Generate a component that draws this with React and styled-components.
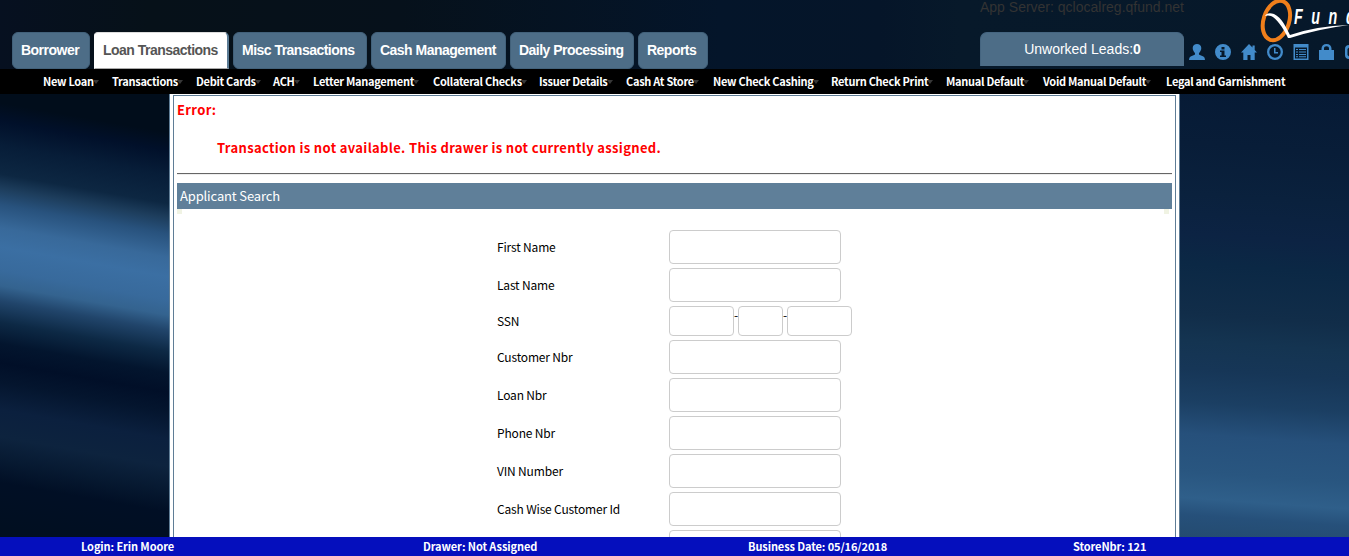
import React from "react";
import styled, { createGlobalStyle } from "styled-components";

const sans = '"Liberation Sans", Arial, sans-serif';
const humanist = '"Noto Sans CJK SC", "Source Sans Pro", sans-serif';

const GlobalStyle = createGlobalStyle`
  * { box-sizing: border-box; }
  body { margin: 0; background: #06152a; font-family: ${humanist}; overflow: hidden; }
`;

const Page = styled.div`
  display: flex;
  flex-direction: column;
  height: 556px;
  width: 100%;
  overflow: hidden;
`;

const Header = styled.header`
  display: flex;
  flex: none;
  height: 69px;
  padding-left: 12px;
  overflow: hidden;
  background: linear-gradient(90deg, #061020 0, #061119 150px, #06111b 400px, #04152a 720px, #051529 880px, #07192a 960px, #06182a 100%);
`;

const Tabs = styled.nav`
  display: flex;
  gap: 4px;
  width: 968px;
  padding-top: 32px;
  flex: none;
`;

const Tab = styled.a`
  width: ${(p) => p.$width}px;
  height: 37px;
  border: 1px solid #42617a;
  border-radius: 6px;
  background: ${(p) => (p.$active ? "#fff" : "#4d6d87")};
  ${(p) => p.$active && "border-color: #ddd #5b7b94 #aaa #fff; border-right-width: 2px; border-radius: 4px 5px 0 0;"}
  color: ${(p) => (p.$active ? "#555" : "#fff")};
  font: bold 14px/35px ${sans};
  letter-spacing: -0.52px;
  padding-left: 8px;
  white-space: nowrap;
  flex: none;
`;

const ServerColumn = styled.div`
  width: 204px;
  flex: none;
`;

const ServerName = styled.div`
  height: 32px;
  font: 14px/15px ${sans};
  color: #333;
  white-space: nowrap;
`;

const Leads = styled.div`
  height: 34px;
  border: 1px solid #456580;
  border-width: 1px 0 0 1px;
  border-radius: 7px 7px 0 0;
  background: #4d6d87;
  color: #fff;
  font: 14px/33px ${sans};
  text-align: center;
`;

const Brand = styled.div`
  width: 165px;
  flex: none;
  overflow: hidden;
`;

const Logo = styled.svg`
  display: block;
  width: 89px;
  height: 44px;
  margin-left: 76px;
`;

const IconBar = styled.div`
  display: flex;
  gap: 10px;
  padding-left: 5px;
  color: #428bca;
  svg { width: 16px; height: 16px; flex: none; display: block; fill: currentColor; }
`;

const MenuBar = styled.nav`
  display: flex;
  flex: none;
  height: 25px;
  padding-left: 43px;
  background: #000;
`;

const MenuItem = styled.a`
  display: flex;
  width: ${(p) => p.$width}px;
  flex: none;
  color: #fff;
  font: bold 11px/25px ${humanist};
  letter-spacing: -0.28px;
  white-space: nowrap;
`;

const Caret = styled.i`
  width: 0;
  height: 0;
  margin: 11px 0 0 -1px;
  border: 3px solid transparent;
  border-top: 4px solid #383838;
  border-bottom: 0;
`;

const Main = styled.main`
  display: flex;
  height: 443px;
  flex: none;
`;

const LeftBackdrop = styled.div`
  width: 169px;
  background: linear-gradient(190deg, #010d1b 0, #010d1b 38px, #01102a 56px, #071d38 80px, #0d2742 108px, #1d3d5c 122px, #28527d 138px, #38699a 161px, #3b6fa3 180px, #386a9c 203px, #34638f 218px, #21456b 233px, #0d2945 254px, #03152e 275px, #010f28 294px, #04152e 313px, #0b203e 340px, #0d233e 367px, #071a32 389px, #010f25 412px, #010f20 466px);
`;

const RightBackdrop = styled.div`
  flex: 1;
  background: linear-gradient(184deg, #061a35 0, #081d38 60px, #0a213d 110px, #0c2343 150px, #0b2845 180px, #112d49 230px, #143451 257px, #163657 285px, #1b3f63 318px, #26507b 350px, #295680 388px, #2f5f8a 414px, #26507a 431px, #244b70 454px);
`;

const Frame = styled.section`
  width: 1011px;
  flex: none;
  padding: 1px 3px 0;
  background: #fff;
  border: solid #5f7d96;
  border-width: 0 1px;
`;

const Content = styled.div`
  height: 442px;
  padding: 0 3px;
  border: 1px solid #5f7d96;
  border-bottom: 0;
  overflow: hidden;
`;

const ErrorTitle = styled.div`
  padding-top: 4px;
  color: #f00;
  font: bold 13px/20px ${humanist};
  letter-spacing: 0.34px;
`;

const ErrorText = styled(ErrorTitle)`
  padding: 18px 0 0 40px;
`;

const Divider = styled.div`
  height: 2px;
  margin-top: 15px;
  border-top: 1px solid #666;
  border-bottom: 1px solid #eee;
`;

const SectionTitle = styled.h2`
  height: 26px;
  margin: 8px 0 0;
  padding-left: 3px;
  background: #5f7f99;
  color: #fff;
  font: 13px/26px ${humanist};
  letter-spacing: -0.15px;
`;

const Corners = styled.div`
  display: flex;
  justify-content: space-between;
  height: 21px;
  padding-right: 3px;
  &::before, &::after { content: ""; width: 5px; height: 5px; background: #f0f3e3; }
`;

const Form = styled.form`
  display: flex;
  flex-direction: column;
  gap: 4px;
  padding-left: 320px;
`;

const Row = styled.label`
  display: grid;
  grid-template-columns: 172px 1fr;
  height: ${(p) => p.$height}px;
  align-items: center;
  color: #000;
  font: 12px/20px ${humanist};
  letter-spacing: -0.17px;
`;

const Input = styled.input`
  display: block;
  width: ${(p) => p.$width}px;
  height: ${(p) => p.$height}px;
  border: 1px solid #ccc;
  border-radius: 4px;
  background: #fff;
  padding: 0 6px;
  outline: none;
`;

const SsnGroup = styled.div`
  display: flex;
`;

const Dash = styled.span`
  width: 4px;
  line-height: 18px;
`;

const Footer = styled.footer`
  display: grid;
  grid-template-columns: 342px 325px 325px 1fr;
  height: 19px;
  flex: none;
  padding-left: 81px;
  background: #050fbd;
  color: #fff;
  font: bold 11px/19px ${humanist};
  letter-spacing: -0.1px;
  white-space: nowrap;
`;

const tabs = [
  ["Borrower", 78],
  ["Loan Transactions", 135],
  ["Misc Transactions", 134],
  ["Cash Management", 135],
  ["Daily Processing", 124],
  ["Reports", 70],
];

const menu = [
  ["New Loan", 69],
  ["Transactions", 84],
  ["Debit Cards", 77],
  ["ACH", 40],
  ["Letter Management", 120],
  ["Collateral Checks", 106],
  ["Issuer Details", 87],
  ["Cash At Store", 87],
  ["New Check Cashing", 118],
  ["Return Check Print", 115],
  ["Manual Default", 97],
  ["Void Manual Default", 123],
  ["Legal and Garnishment", 130],
];

const fields = ["First Name", "Last Name", "SSN", "Customer Nbr", "Loan Nbr", "Phone Nbr", "VIN Number", "Cash Wise Customer Id", ""];

function QFundLogo() {
  return (
    <Logo viewBox="0 0 89 44">
      <ellipse cx="16.4" cy="20.5" rx="12.8" ry="20.3" transform="rotate(18 16.4 20.5)" fill="none" stroke="#f07f1b" strokeWidth="4" />
      <path d="M5 16 Q7 12 14 14 C22 18 26 27 30 35 Q56 26 89 25 Q58 29 30 38 L28 38 C23 27 16 18 11 16 Q8 15 5 16Z" fill="#fff" />
      <text x="33" y="24" fill="#fff" fontFamily="Liberation Sans, Arial, sans-serif" fontWeight="bold" fontStyle="italic" fontSize="22" transform="translate(34 24) scale(.65 1) translate(-33 -24)" letterSpacing="13.2">Fund</text>
    </Logo>
  );
}

function Icons() {
  return (
    <IconBar>
      <svg viewBox="0 0 16 16"><path d="M8 0C5.7 0 3.700 1.600 3.700 4c0 2 .9 3.300 2 4.700.7 1 .4 2-.6 2.400L1.600 12.500Q0 13.300 0 16h16q0-2.700-1.600-3.500l-3.500-1.400c-1-.4-1.300-1.400-.6-2.400 1.100-1.400 2-2.700 2-4.700 0-2.400-2-4-4.300-4Z" /></svg>
      <svg viewBox="0 0 16 16"><path fillRule="evenodd" d="M8 0a8 8 0 1 1 0 16A8 8 0 0 1 8 0ZM6.500 3v2.500h3V3h-3ZM5 6.500V8h1.500v3.500H5V13h6v-1.500H9.500v-5H5Z" /></svg>
      <svg viewBox="0 0 16 16"><path d="M8 0 0 8.400h2.300V16h4.200v-5h3v5h4.200V8.400H16l-2.300-2.500V1.500h-2.200v2.100L8 0Z" /></svg>
      <svg viewBox="0 0 16 16"><path fillRule="evenodd" d="M8 0a8 8 0 1 1 0 16A8 8 0 0 1 8 0Zm0 2.300a5.700 5.700 0 1 0 0 11.400A5.700 5.700 0 0 0 8 2.300ZM7 4h1.500v4H11v1.500H7V4Z" /></svg>
      <svg viewBox="0 0 16 16"><path fillRule="evenodd" d="M.5 0h15v16H.5V0ZM2 3.500v11h12v-11H2ZM3 5h2v1H3V5Zm3 0h7v1H6V5ZM3 7.500h2v1H3v-1Zm3 0h7v1H6v-1ZM3 10h2v1H3v-1Zm3 0h7v1H6v-1Zm-3 2.300h2v1H3v-1Zm3 0h7v1H6v-1Z" /></svg>
      <svg viewBox="0 0 16 16"><path fillRule="evenodd" d="M2.500 6V4.500C2.500 1.800 4.500 0 7.500 0s5 1.800 5 4.500V6H15v10H0V6h2.500ZM5 6h5V4.500c0-1.500-1-2.300-2.500-2.300S5 3 5 4.500V6Z" /></svg>
      <svg viewBox="0 0 16 16"><path fillRule="evenodd" d="M4 1h9v2.500H4L2.500 5v6L4 12.500h9V15H4c-2.500 0-4-1.500-4-4V5c0-2.500 1.500-4 4-4Z" /></svg>
    </IconBar>
  );
}

export default function App() {
  return (
    <Page>
      <GlobalStyle />
      <Header>
        <Tabs>
          {tabs.map(([name, width]) => (
            <Tab key={name} $width={width} $active={name === "Loan Transactions"}>{name}</Tab>
          ))}
        </Tabs>
        <ServerColumn>
          <ServerName>App Server: qclocalreg.qfund.net</ServerName>
          <Leads>Unworked Leads:<b>0</b></Leads>
        </ServerColumn>
        <Brand>
          <QFundLogo />
          <Icons />
        </Brand>
      </Header>
      <MenuBar>
        {menu.map(([name, width], i) => (
          <MenuItem key={name} $width={width}>
            {name}
            {i < menu.length - 1 && <Caret />}
          </MenuItem>
        ))}
      </MenuBar>
      <Main>
        <LeftBackdrop />
        <Frame>
          <Content>
            <ErrorTitle>Error:</ErrorTitle>
            <ErrorText>Transaction is not available. This drawer is not currently assigned.</ErrorText>
            <Divider />
            <SectionTitle>Applicant Search</SectionTitle>
            <Corners />
            <Form>
              {fields.map((name) =>
                name === "SSN" ? (
                  <Row key={name} $height={30}>
                    <span>{name}</span>
                    <SsnGroup>
                      <Input $width={65} $height={30} />
                      <Dash>-</Dash>
                      <Input $width={45} $height={30} />
                      <Dash>-</Dash>
                      <Input $width={65} $height={30} />
                    </SsnGroup>
                  </Row>
                ) : (
                  <Row key={name} $height={34}>
                    <span>{name}</span>
                    <Input $width={172} $height={34} />
                  </Row>
                )
              )}
            </Form>
          </Content>
        </Frame>
        <RightBackdrop />
      </Main>
      <Footer>
        <span>Login: Erin Moore</span>
        <span>Drawer: Not Assigned</span>
        <span>Business Date: 05/16/2018</span>
        <span>StoreNbr: 121</span>
      </Footer>
    </Page>
  );
}
